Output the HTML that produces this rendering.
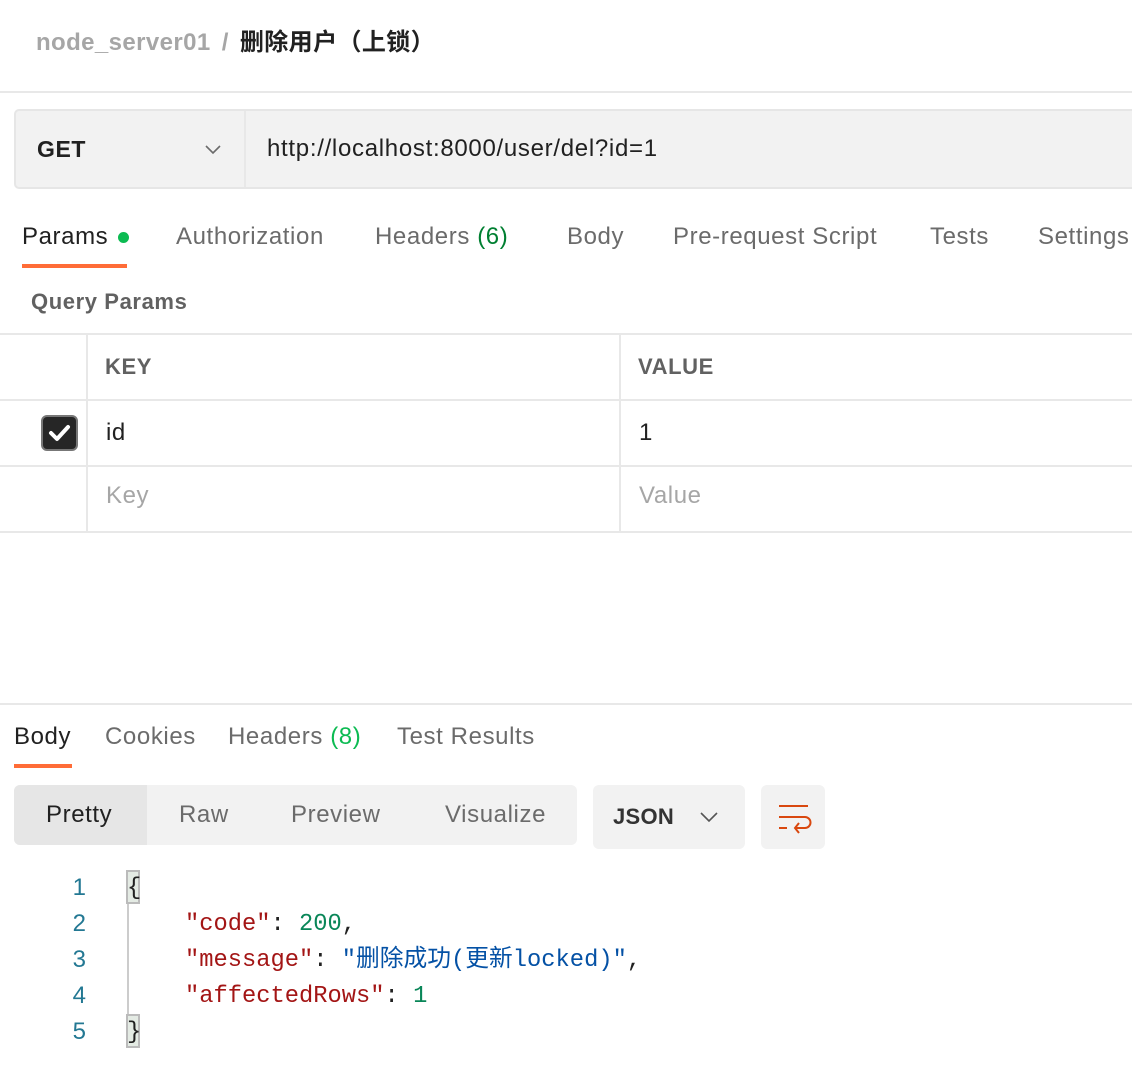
<!DOCTYPE html>
<html><head><meta charset="utf-8"><style>
*{margin:0;padding:0;box-sizing:border-box}
body{width:1132px;height:1075px;background:#fff;position:relative;overflow:hidden;font-family:"Liberation Sans","Noto Sans CJK SC",sans-serif;color:#212121}
.a{position:absolute;white-space:nowrap;line-height:30px;font-size:24px;letter-spacing:0.6px}
.g{color:#6b6b6b}
.line{position:absolute;background:#e8e8e8}
.mono{font-family:"Liberation Mono","Noto Sans CJK SC",monospace;font-size:23.75px;line-height:30px;position:absolute;white-space:pre}
.k{color:#a31515}.n{color:#098658}.s{color:#0451a5}.p{color:#212121}
.ln{position:absolute;left:56px;width:30px;text-align:right;color:#237893;font-size:24px;line-height:30px}
</style></head><body>
<div class="a" style="left:36px;top:28px;font-size:24px;letter-spacing:0.4px;color:#a6a6a6;font-weight:bold">node_server01 <span style="margin:0 4px">/</span> <span style="color:#212121">删除用户（上锁）</span></div>
<div class="line" style="left:0;top:91px;width:1132px;height:2px"></div>

<div style="position:absolute;left:14px;top:109px;width:1130px;height:80px;background:#f2f2f2;border:2px solid #e6e6e6;border-radius:5px"></div>
<div class="line" style="left:244px;top:111px;width:2px;height:76px"></div>
<div class="a" style="left:37px;top:134px;font-weight:bold;font-size:23px">GET</div>
<svg style="position:absolute;left:204px;top:143px" width="18" height="12"><path d="M2 3l7 7 7-7" fill="none" stroke="#6b6b6b" stroke-width="1.6"/></svg>
<div class="a" style="left:267px;top:134px;font-size:24px;letter-spacing:0.7px">http://localhost:8000/user/del?id=1</div>

<div class="a" style="left:22px;top:222px">Params <span style="display:inline-block;width:11px;height:11px;border-radius:50%;background:#0cbb52;margin-left:2px;vertical-align:1px"></span></div>
<div style="position:absolute;left:22px;top:264px;width:105px;height:4px;background:#ff6c37"></div>
<div class="a g" style="left:176px;top:222px">Authorization</div>
<div class="a g" style="left:375px;top:222px">Headers <span style="color:#007f31">(6)</span></div>
<div class="a g" style="left:567px;top:222px">Body</div>
<div class="a g" style="left:673px;top:222px">Pre-request Script</div>
<div class="a g" style="left:930px;top:222px">Tests</div>
<div class="a g" style="left:1038px;top:222px">Settings</div>

<div class="a" style="left:31px;top:287px;font-weight:bold;font-size:22px;color:#616161">Query Params</div>
<div class="line" style="left:0;top:333px;width:1132px;height:2px"></div>
<div class="line" style="left:0;top:399px;width:1132px;height:2px"></div>
<div class="line" style="left:0;top:465px;width:1132px;height:2px"></div>
<div class="line" style="left:0;top:531px;width:1132px;height:2px"></div>
<div class="line" style="left:86px;top:335px;width:2px;height:196px"></div>
<div class="line" style="left:619px;top:335px;width:2px;height:196px"></div>
<div class="a" style="left:105px;top:352px;font-weight:bold;font-size:22px;color:#616161">KEY</div>
<div class="a" style="left:638px;top:352px;font-weight:bold;font-size:22px;color:#616161">VALUE</div>
<div style="position:absolute;left:41px;top:415px;width:37px;height:36px;background:#262626;border:2px solid #777;border-radius:6px"></div>
<svg style="position:absolute;left:41px;top:415px" width="37" height="36"><path d="M10 18l6 6 11-12" fill="none" stroke="#fff" stroke-width="4" stroke-linecap="round" stroke-linejoin="round"/></svg>
<div class="a" style="left:106px;top:418px">id</div>
<div class="a" style="left:639px;top:418px">1</div>
<div class="a" style="left:106px;top:481px;color:#a6a6a6">Key</div>
<div class="a" style="left:639px;top:481px;color:#a6a6a6">Value</div>

<div class="line" style="left:0;top:703px;width:1132px;height:2px"></div>
<div class="a" style="left:14px;top:722px">Body</div>
<div style="position:absolute;left:14px;top:764px;width:58px;height:4px;background:#ff6c37"></div>
<div class="a g" style="left:105px;top:722px">Cookies</div>
<div class="a g" style="left:228px;top:722px">Headers <span style="color:#0cbb52">(8)</span></div>
<div class="a g" style="left:397px;top:722px">Test Results</div>

<div style="position:absolute;left:14px;top:785px;width:563px;height:60px;background:#f2f2f2;border-radius:6px;overflow:hidden"><div style="width:133px;height:60px;background:#e6e6e6"></div></div>
<div class="a" style="left:46px;top:800px">Pretty</div>
<div class="a g" style="left:179px;top:800px">Raw</div>
<div class="a g" style="left:291px;top:800px">Preview</div>
<div class="a g" style="left:445px;top:800px">Visualize</div>
<div style="position:absolute;left:593px;top:785px;width:152px;height:64px;background:#f2f2f2;border-radius:6px"></div>
<div class="a" style="left:613px;top:802px;font-weight:bold;font-size:22px;letter-spacing:0.3px;color:#333">JSON</div>
<svg style="position:absolute;left:699px;top:811px" width="20" height="12"><path d="M2 2l8 8 8-8" fill="none" stroke="#555" stroke-width="1.6"/></svg>
<div style="position:absolute;left:761px;top:785px;width:64px;height:64px;background:#f2f2f2;border-radius:6px"></div>
<svg style="position:absolute;left:761px;top:785px" width="64" height="64"><g fill="none" stroke="#d9480f" stroke-width="2"><path d="M18 21h29M18 32h26a5 5 0 0 1 0 11h-10M38 38l-4 5 4 5M18 43h8"/></g></svg>

<div class="ln" style="top:873px">1</div>
<div class="ln" style="top:909px">2</div>
<div class="ln" style="top:945px">3</div>
<div class="ln" style="top:981px">4</div>
<div class="ln" style="top:1017px">5</div>
<div style="position:absolute;left:127px;top:880px;width:2px;height:150px;background:#ccc"></div>
<div style="position:absolute;left:126px;top:870px;width:14px;height:34px;background:#e4ebe4;border:2px solid #bbb"></div>
<div style="position:absolute;left:126px;top:1014px;width:14px;height:34px;background:#e4ebe4;border:2px solid #bbb"></div>
<div class="mono" style="left:127px;top:874px">{</div>
<div class="mono" style="left:127px;top:1018px">}</div>
<div class="mono" style="left:185px;top:910px"><span class="k">"code"</span><span class="p">: </span><span class="n">200</span><span class="p">,</span></div>
<div class="mono" style="left:185px;top:946px"><span class="k">"message"</span><span class="p">: </span><span class="s">"删除成功(更新locked)"</span><span class="p">,</span></div>
<div class="mono" style="left:185px;top:982px"><span class="k">"affectedRows"</span><span class="p">: </span><span class="n">1</span></div>
</body></html>
